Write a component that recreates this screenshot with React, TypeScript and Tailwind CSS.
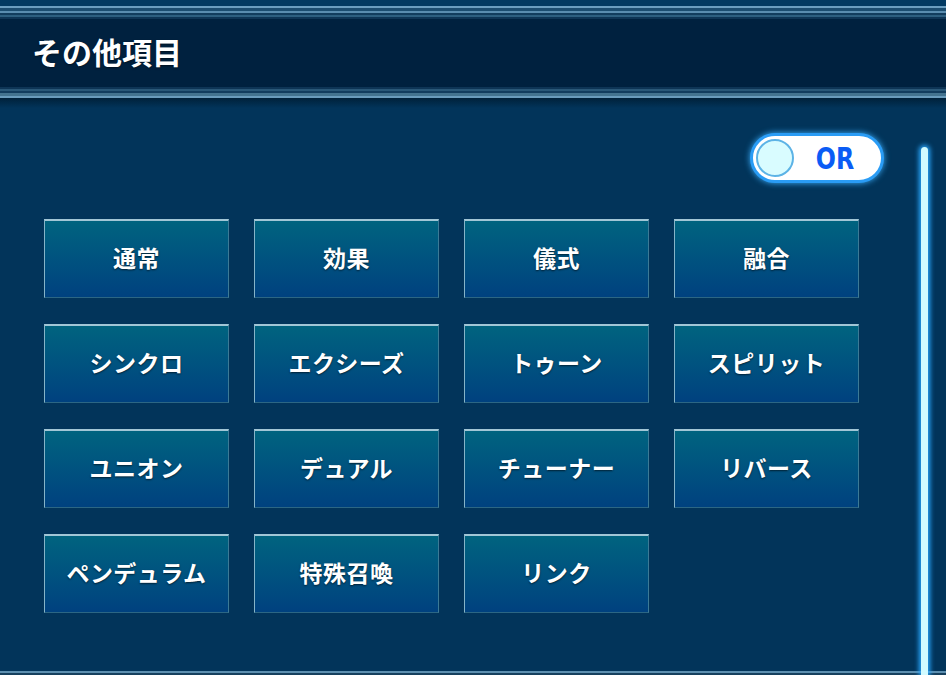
const items = [
  '通常', '効果', '儀式', '融合',
  'シンクロ', 'エクシーズ', 'トゥーン', 'スピリット',
  'ユニオン', 'デュアル', 'チューナー', 'リバース',
  'ペンデュラム', '特殊召喚', 'リンク',
];

function CategoryButton({ label }: { label: string }) {
  return (
    <button className="h-[79px] pb-[3px] flex items-center justify-center bg-gradient-to-b from-[#00637f] to-[#00417f] border-t-2 border-t-[#a2c6d6] border-l border-l-[#86b4c8] border-r border-r-[#3c7a96] border-b border-b-[#2c6684] text-white font-bold text-[23px] tracking-[0.02em] [text-shadow:0_1px_2px_rgba(0,0,0,0.6)]">
      {label}
    </button>
  );
}

export default function App() {
  return (
    <div className="relative w-[946px] h-[675px] overflow-hidden bg-[#02345a] flex flex-col font-['Noto_Sans_CJK_JP','Noto_Sans',sans-serif]">
      {/* Header frame, top lines */}
      <div className="h-[6px] bg-[#023a62]" />
      <div className="h-[2px] bg-[#6a9ec0]" />
      <div className="h-[3px] bg-[#1b4d70]" />
      <div className="h-[2px] bg-[#5a8db0]" />
      <div className="h-[2px] bg-[#123d5e]" />
      <div className="h-[2px] bg-[#2d5f80]" />
      <div className="h-[2px] bg-[#0e3556]" />

      {/* Header */}
      <div className="h-[68px] bg-[#00213f] flex items-center pl-[32px] pb-[5px]">
        <h1 className="text-white font-bold text-[30px] leading-none [text-shadow:0_1px_2px_rgba(0,0,0,0.5)]">
          その他項目
        </h1>
      </div>

      {/* Header frame, bottom lines */}
      <div className="h-[2px] bg-[#0e3556]" />
      <div className="h-[2px] bg-[#2a5878]" />
      <div className="h-[2px] bg-[#123d5e]" />
      <div className="h-[3px] bg-[#43738f]" />
      <div className="h-[2px] bg-[#6a9cbc]" />
      <div className="h-[10px] bg-gradient-to-b from-[#00213a] to-[#02345a]" />

      {/* Body */}
      <div className="flex-1 flex flex-col">
        <div className="flex-1 pl-[44px] pr-[62px] pt-[25px]">
          <div className="flex justify-end">
            <div className="w-[134px] h-[50px] rounded-full bg-white border-[3px] border-[#2a9cf5] shadow-[0_0_6px_#3ab0ff] flex items-center pl-[3px]">
              <div className="w-[38px] h-[38px] rounded-full bg-[#d9fcff] border-2 border-[#5cb3e6]" />
              <span className="flex-1 text-center pr-[6px] text-[#0b5cf5] font-['DejaVu_Sans_Condensed','DejaVu_Sans',sans-serif] font-bold text-[31px] leading-none scale-x-[0.85]">
                OR
              </span>
            </div>
          </div>

          <div className="mt-[36px] grid grid-cols-[repeat(4,185px)] gap-x-[25px] gap-y-[26px]">
            {items.map((label) => (
              <CategoryButton key={label} label={label} />
            ))}
          </div>
        </div>
        <div className="h-[2px] bg-[#5d8fb0]" />
        <div className="h-[2px] bg-[#16405e]" />
      </div>

      {/* Scrollbar thumb */}
      <div className="absolute left-[921px] top-[147px] bottom-0 w-[7px] rounded-t-full bg-[#d2fbff] shadow-[0_0_5px_2px_#2aa8ff]" />
    </div>
  );
}
